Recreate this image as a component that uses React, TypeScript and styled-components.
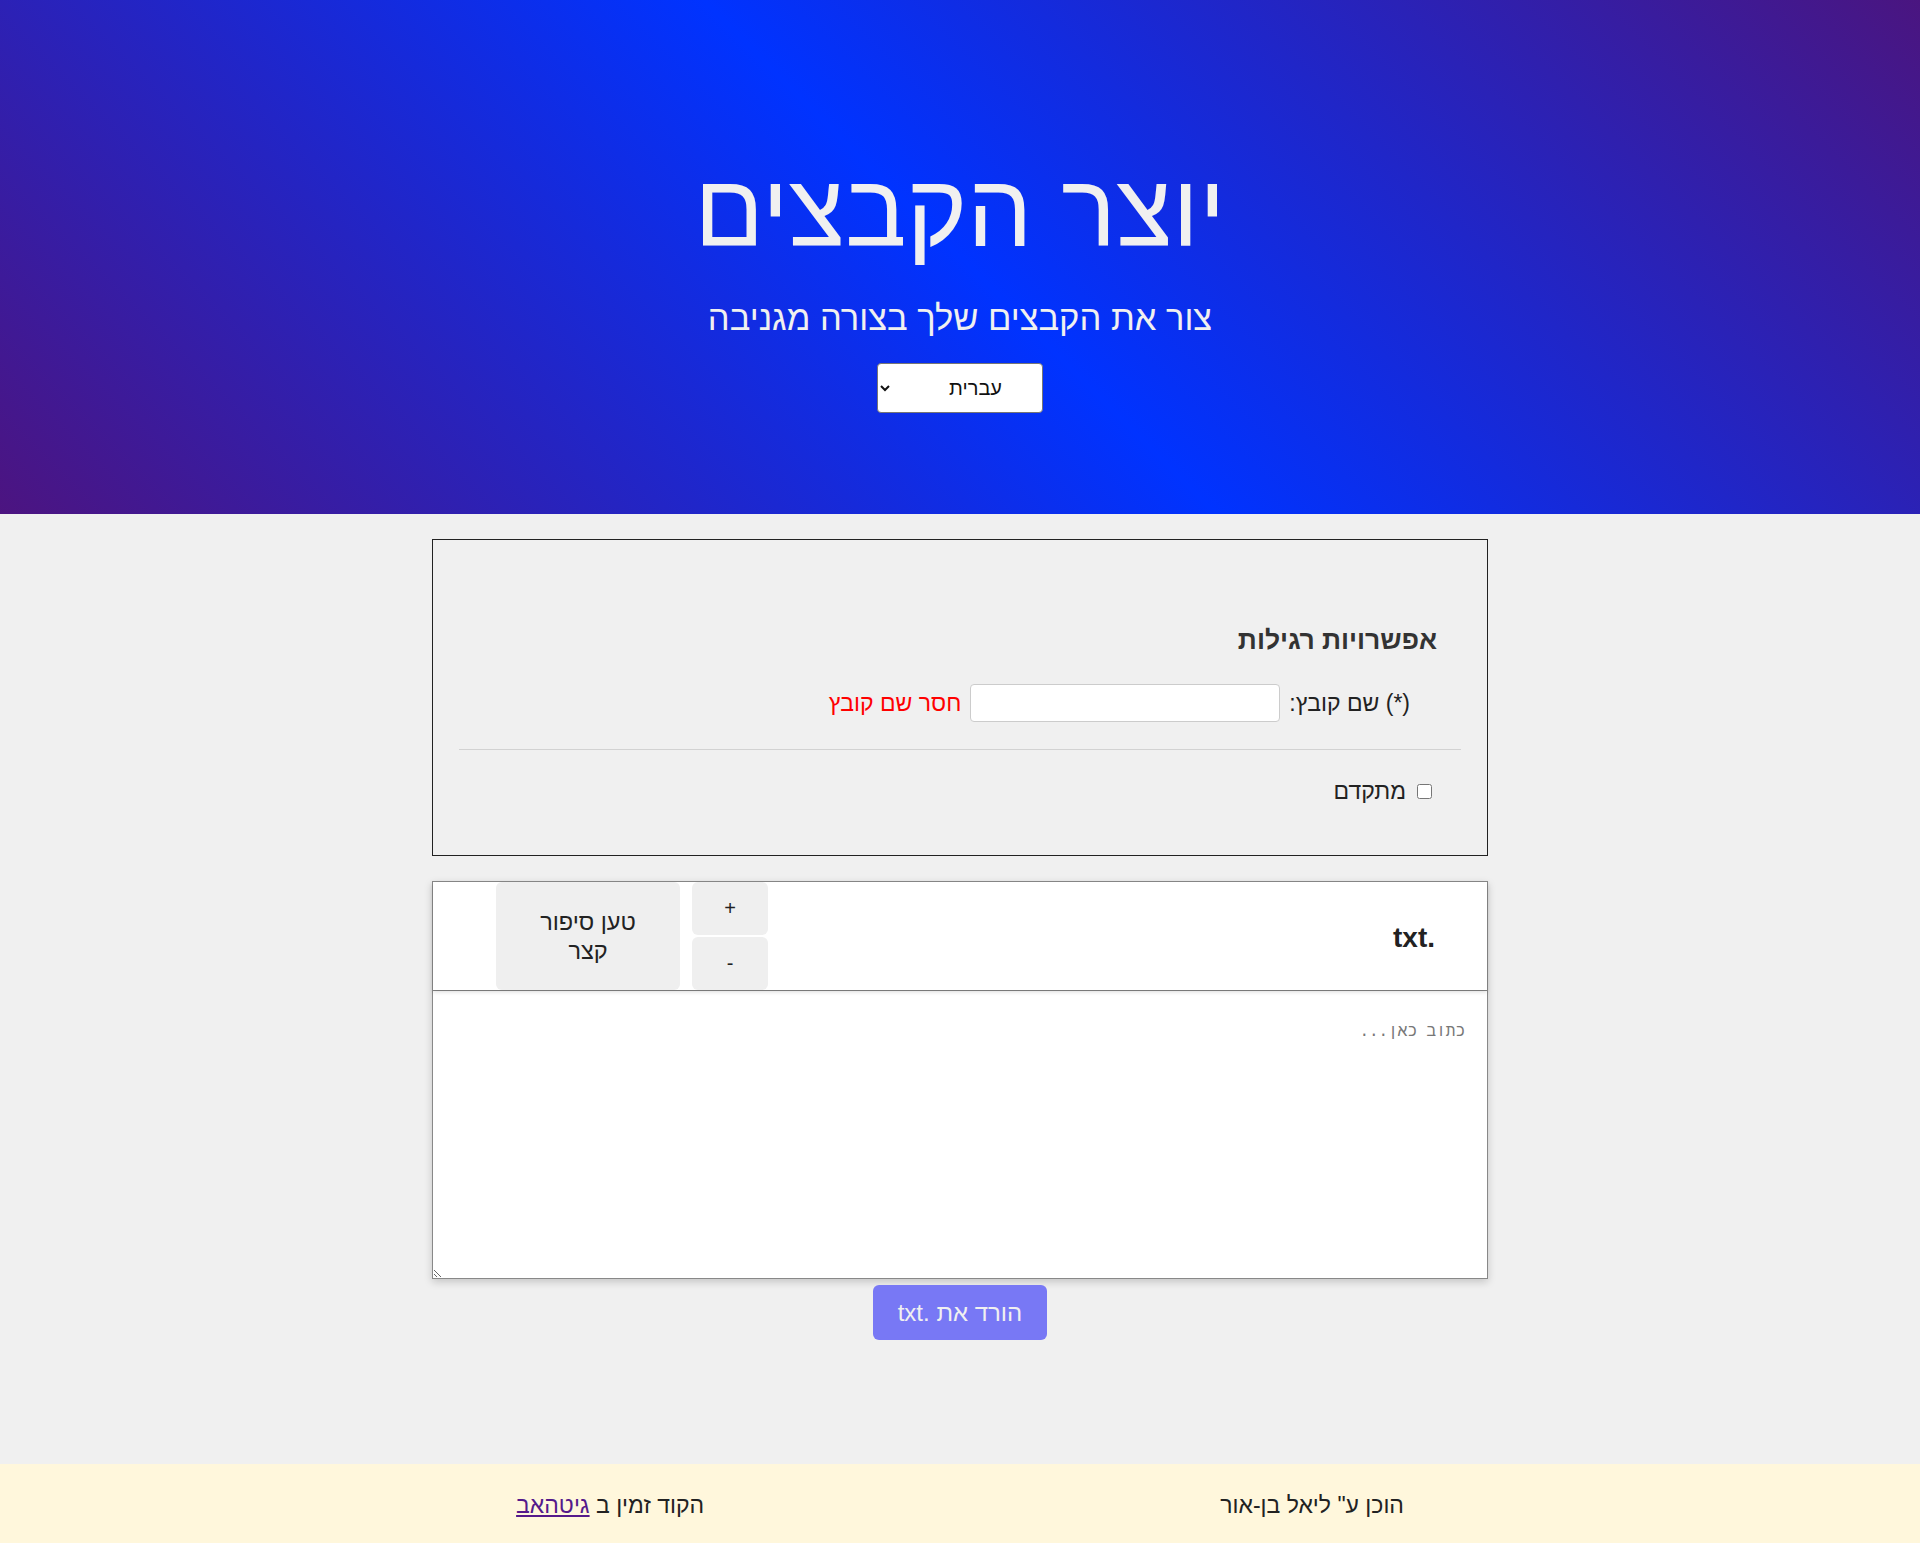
import React from "react";
import styled, { createGlobalStyle } from "styled-components";

const Global = createGlobalStyle`
  html, body { margin: 0; padding: 0; }
  body {
    background: #f0f0f0;
    font-family: "Liberation Sans", Arial, sans-serif;
    color: #222;
  }
`;

const Page = styled.div`
  min-height: 100vh;
  display: flex;
  flex-direction: column;
  direction: rtl;
`;

const Hero = styled.header`
  height: 514px;
  box-sizing: border-box;
  padding-top: 156px;
  display: flex;
  flex-direction: column;
  align-items: center;
  color: #f0f0f0;
  background: linear-gradient(45deg, #4c1480 0%, #0033ff 50%, #4a1580 100%);
`;

const Title = styled.h1`
  margin: 0;
  font-size: 103px;
  font-weight: 400;
  line-height: 110px;
`;

const Subtitle = styled.p`
  margin: 34px 0 0;
  font-size: 34.5px;
  line-height: 37px;
`;

const LangSelect = styled.select`
  margin-top: 26px;
  width: 166px;
  height: 50px;
  font-family: "Liberation Sans", Arial, sans-serif;
  font-size: 20px;
  background: #fff;
  color: #111;
  border: 1px solid #767676;
  border-radius: 4px;
  padding: 0 36px 0 10px;
`;

const Main = styled.main`
  display: flex;
  flex-direction: column;
  align-items: center;
  padding-top: 25px;
`;

const OptionsCard = styled.section`
  width: 55%;
  box-sizing: border-box;
  border: 1px solid #222;
  padding: 86px 26px 52px;
`;

const SectionTitle = styled.h3`
  margin: 0 24px 30px 0;
  font-size: 26.5px;
  line-height: 28px;
  font-weight: 700;
  color: #333;
`;

const FieldRow = styled.div`
  display: flex;
  align-items: center;
  gap: 9px;
  margin-right: 51px;
  font-size: 23px;
`;

const TextInput = styled.input`
  width: 310px;
  height: 38px;
  box-sizing: border-box;
  border: 1px solid #ccc;
  border-radius: 4px;
  background: #fff;
`;

const ErrorText = styled.span`
  color: #ff0000;
`;

const Divider = styled.hr`
  margin: 27px 0 30px;
  border: none;
  border-top: 1px solid #d2d2d2;
`;

const CheckRow = styled.label`
  display: flex;
  align-items: center;
  gap: 11px;
  margin-right: 29px;
  font-size: 23px;
  line-height: 23px;
`;

const Check = styled.input`
  margin: 0;
  width: 15px;
  height: 15px;
`;

const EditorCard = styled.section`
  width: 55%;
  box-sizing: border-box;
  margin-top: 25px;
  border: 1px solid #888;
  background: #fff;
  box-shadow: 0 3px 8px rgba(0, 0, 0, 0.18);
  display: flex;
  flex-direction: column;
`;

const EditorBar = styled.div`
  height: 108px;
  display: flex;
  align-items: stretch;
  justify-content: space-between;
  padding: 0 52px 0 63px;
  box-shadow: 0 2px 4px rgba(0, 0, 0, 0.14);
  position: relative;
  z-index: 1;
`;

const Ext = styled.h2`
  margin: 0;
  align-self: center;
  font-size: 28px;
  font-weight: 700;
  color: #222;
  padding-top: 4px;
`;

const Controls = styled.div`
  display: flex;
  gap: 12px;
`;

const StepCol = styled.div`
  display: flex;
  flex-direction: column;
  gap: 2px;
`;

const SoftButton = styled.button<{ $wide?: boolean }>`
  border: none;
  border-radius: 6px;
  background: #efefef;
  color: #222;
  font-family: "Liberation Sans", Arial, sans-serif;
  font-size: ${(p) => (p.$wide ? "23.5px" : "20px")};
  line-height: 29px;
  width: ${(p) => (p.$wide ? "184px" : "76px")};
  padding: ${(p) => (p.$wide ? "2px 26px 0" : "0")};
  flex: 1;
  cursor: pointer;
`;

const Editor = styled.textarea`
  height: 288px;
  box-sizing: border-box;
  border: none;
  border-top: 1px solid #888;
  padding: 32px 22px 20px;
  font-family: "Liberation Mono", "Courier New", monospace;
  font-size: 16px;
  resize: vertical;
  outline: none;
  &::placeholder { color: #777; }
`;

const DownloadButton = styled.button`
  margin-top: 6px;
  width: 174px;
  height: 55px;
  border: none;
  border-radius: 6px;
  background: #7878f5;
  color: #f0f0f0;
  font-family: "Liberation Sans", Arial, sans-serif;
  font-size: 24px;
  cursor: pointer;
`;

const Footer = styled.footer`
  margin-top: auto;
  height: 79px;
  box-sizing: border-box;
  padding-top: 4px;
  background: #fff7dc;
  display: flex;
  align-items: center;
  justify-content: space-evenly;
  font-size: 23px;
  color: #222;
`;

const FooterLink = styled.a`
  color: #551a8b;
`;

export default function App() {
  return (
    <>
      <Global />
      <Page dir="rtl">
        <Hero>
          <Title>יוצר הקבצים</Title>
          <Subtitle>צור את הקבצים שלך בצורה מגניבה</Subtitle>
          <LangSelect defaultValue="he">
            <option value="he">עברית</option>
            <option value="en">English</option>
          </LangSelect>
        </Hero>
        <Main>
          <OptionsCard>
            <SectionTitle>אפשרויות רגילות</SectionTitle>
            <FieldRow>
              <label htmlFor="fname">(*) שם קובץ:</label>
              <TextInput id="fname" type="text" />
              <ErrorText>חסר שם קובץ</ErrorText>
            </FieldRow>
            <Divider />
            <CheckRow>
              <Check type="checkbox" />
              מתקדם
            </CheckRow>
          </OptionsCard>
          <EditorCard>
            <EditorBar>
              <Ext>.txt</Ext>
              <Controls>
                <StepCol>
                  <SoftButton>+</SoftButton>
                  <SoftButton>-</SoftButton>
                </StepCol>
                <SoftButton $wide>טען סיפור קצר</SoftButton>
              </Controls>
            </EditorBar>
            <Editor placeholder="כתוב כאן..." />
          </EditorCard>
          <DownloadButton>הורד את .txt</DownloadButton>
        </Main>
        <Footer>
          <span>הוכן ע" ליאל בן-אור</span>
          <span>
            הקוד זמין ב <FooterLink href="#">גיטהאב </FooterLink>
          </span>
        </Footer>
      </Page>
    </>
  );
}
